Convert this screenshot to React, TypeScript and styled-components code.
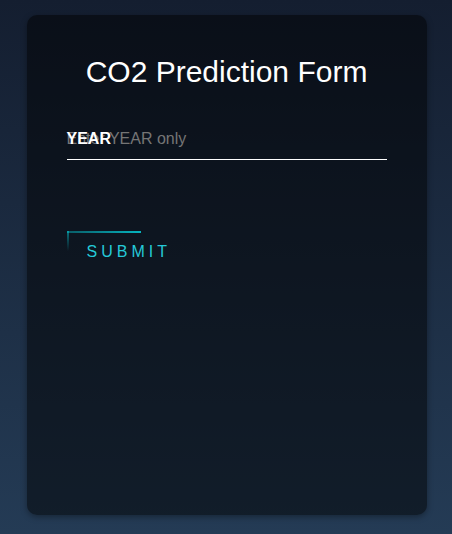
import React from "react";
import styled, { createGlobalStyle } from "styled-components";

const GlobalStyle = createGlobalStyle`
  html, body {
    margin: 0;
    padding: 0;
    height: 100%;
  }
  body {
    font-family: "Liberation Sans", Arial, sans-serif;
    background: linear-gradient(#141e30, #243b55);
  }
  #root {
    height: 100%;
  }
`;

const Page = styled.div`
  box-sizing: border-box;
  height: 100%;
  display: flex;
  justify-content: center;
  padding: 15px 0 0 1px;
`;

const FormBox = styled.div`
  box-sizing: border-box;
  width: 400px;
  height: 500px;
  padding: 40px;
  background: rgba(0, 0, 0, 0.5);
  border-radius: 10px;
  box-shadow: 0 2px 6px rgba(0, 0, 0, 0.35);
`;

const Title = styled.h2`
  margin: 0 0 31px;
  padding: 0;
  color: #fff;
  font-size: 30px;
  font-weight: normal;
  text-align: center;
`;

const UserBox = styled.div`
  position: relative;
`;

const Input = styled.input`
  box-sizing: content-box;
  width: 100%;
  padding: 10px 0 11px;
  margin: 0 0 30px;
  font-family: "Liberation Sans", Arial, sans-serif;
  font-size: 16px;
  color: #fff;
  border: none;
  border-bottom: 1px solid #fff;
  outline: none;
  background: transparent;

  &::placeholder {
    color: #757575;
  }
`;

const Label = styled.label`
  position: absolute;
  top: 0;
  left: 0;
  padding: 10px 0;
  font-size: 16px;
  font-weight: bold;
  color: #fff;
  pointer-events: none;
`;

const SubmitLink = styled.a`
  position: relative;
  display: inline-block;
  margin-top: 41px;
  padding: 12px 20px 10px;
  color: #25c9d8;
  font-size: 16px;
  text-decoration: none;
  text-transform: uppercase;
  letter-spacing: 4px;
  overflow: hidden;
  cursor: pointer;
`;

const TopTrail = styled.span`
  position: absolute;
  top: 0;
  left: 0;
  width: 74px;
  height: 2px;
  background: linear-gradient(90deg, rgba(3, 233, 244, 0.45), #03e9f4);
  opacity: 0.75;
`;

const LeftTrail = styled.span`
  position: absolute;
  top: 0;
  left: 0;
  width: 2px;
  height: 20px;
  background: linear-gradient(180deg, rgba(3, 233, 244, 0.45), transparent);
`;

export default function App() {
  return (
    <>
      <GlobalStyle />
      <Page>
        <FormBox>
          <Title>CO2 Prediction Form</Title>
          <form onSubmit={(e) => e.preventDefault()}>
            <UserBox>
              <Input type="text" name="year" placeholder="Enter YEAR only" />
              <Label>YEAR</Label>
            </UserBox>
            <SubmitLink>
              <TopTrail />
              <LeftTrail />
              Submit
            </SubmitLink>
          </form>
        </FormBox>
      </Page>
    </>
  );
}
